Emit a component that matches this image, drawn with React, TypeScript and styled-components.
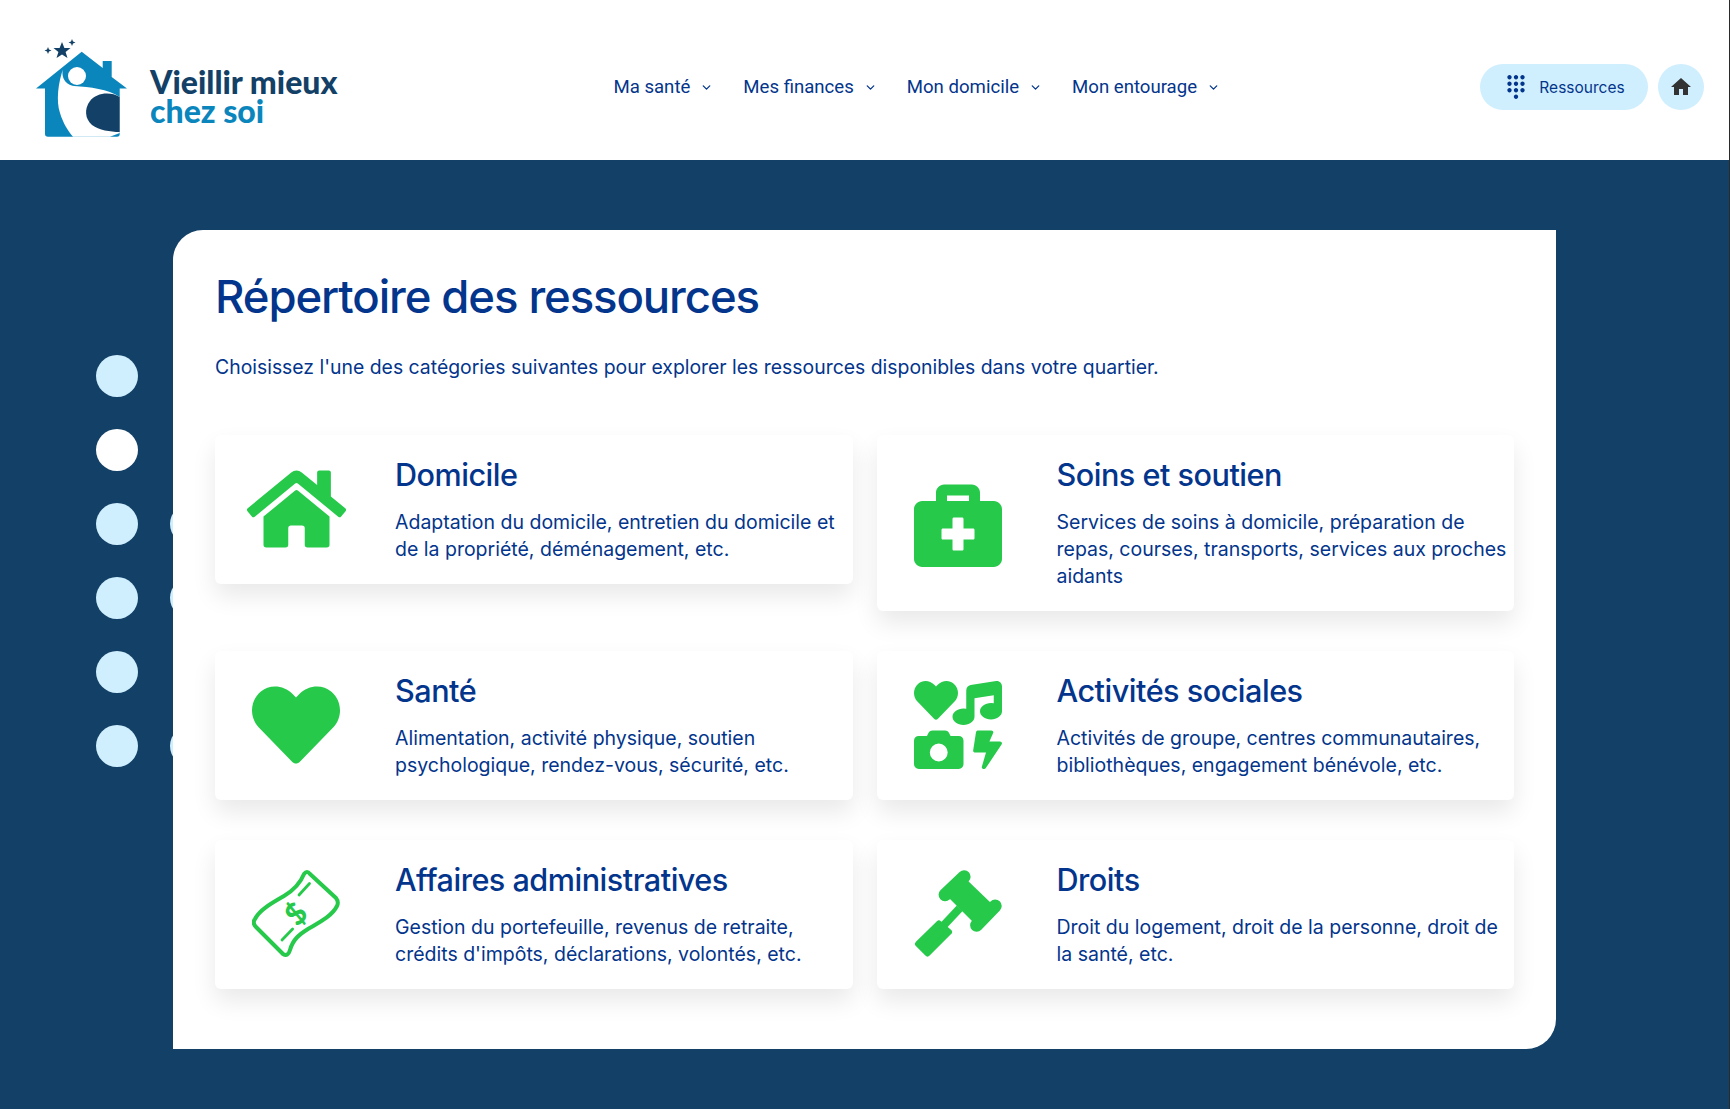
import React from 'react';
import styled, { createGlobalStyle } from 'styled-components';
import { FaHome, FaBriefcaseMedical, FaHeart, FaIcons } from 'react-icons/fa';
import { MdDialpad, MdHome } from 'react-icons/md';
import { ChevronDown } from 'lucide-react';

const navy = '#134066';
const blue = '#03358c';
const green = '#26c94a';
const sky = '#cfeffe';

const GlobalStyle = createGlobalStyle`
  html, body {
    margin: 0;
    padding: 0;
    background: #fff;
  }
  body {
    font-family: 'Inter', 'Liberation Sans', sans-serif;
    color: ${blue};
  }
  * {
    box-sizing: border-box;
  }
`;

const Page = styled.div`
  width: 1730px;
  height: 1109px;
  display: flex;
  flex-direction: column;
  overflow: hidden;
  border-right: 1px solid #2a2a2a;
`;

const Header = styled.header`
  height: 160px;
  flex: none;
  background: #fff;
  display: flex;
  justify-content: space-between;
  align-items: center;
  padding: 14px 25px 0 36px;
`;

const LogoLink = styled.a`
  display: flex;
  align-items: center;
  gap: 15px;
  text-decoration: none;
  margin-top: 3px;
`;

const LogoText = styled.div`
  display: flex;
  flex-direction: column;
  font-family: 'Lato', sans-serif;
  font-weight: 900;
  font-size: 32px;
  line-height: 29px;
  margin-top: 14px;
`;

const LogoLine = styled.span<{ $light?: boolean }>`
  display: block;
  color: ${({ $light }) => ($light ? '#0b86bd' : navy)};
`;

const Nav = styled.nav`
  display: flex;
  align-items: center;
  gap: 30px;
  margin-left: 16px;
`;

const NavItem = styled.a`
  display: flex;
  align-items: center;
  gap: 10px;
  font-family: 'Roboto', sans-serif;
  font-size: 18.6px;
  color: ${blue};

  svg {
    width: 13px;
    height: 13px;
    stroke-width: 2.4;
  }
`;

const HeaderActions = styled.div`
  display: flex;
  justify-content: flex-end;
  gap: 10px;
`;

const ResourcesButton = styled.button`
  width: 168px;
  height: 46px;
  border: none;
  border-radius: 23px;
  background: ${sky};
  color: ${blue};
  display: flex;
  align-items: center;
  justify-content: center;
  gap: 10px;
  font-family: 'Inter', sans-serif;
  font-size: 15.5px;

  svg {
    width: 26px;
    height: 26px;
  }
`;

const HomeButton = styled.button`
  width: 46px;
  height: 46px;
  border: none;
  border-radius: 50%;
  background: ${sky};
  color: #333;
  display: flex;
  align-items: center;
  justify-content: center;
  padding: 0;

  svg {
    width: 24px;
    height: 24px;
  }
`;

const Main = styled.main`
  position: relative;
  flex: 1;
  background: ${navy};
  padding: 70px 173px 60px;
`;

const DotField = styled.div`
  position: absolute;
  left: 96px;
  top: 195px;
  display: grid;
  grid-template-columns: repeat(2, 42px);
  grid-auto-rows: 42px;
  column-gap: 32px;
  row-gap: 32px;
`;

const Dot = styled.span<{ $tone: string }>`
  border-radius: 50%;
  background: ${({ $tone }) => $tone};
`;

const Panel = styled.section`
  position: relative;
  height: 819px;
  background: #fff;
  border-radius: 30px 0 30px 0;
  padding: 39px 42px 0;
`;

const Title = styled.h1`
  margin: 0;
  font-size: 45.5px;
  line-height: 56px;
  font-weight: 450;
  letter-spacing: -1.1px;
  color: ${blue};
`;

const Intro = styled.p`
  margin: 28px 0 0;
  font-size: 19.4px;
  line-height: 28px;
  color: ${blue};
`;

const CardGrid = styled.div`
  margin-top: 54px;
  display: grid;
  grid-template-columns: repeat(2, 1fr);
  column-gap: 24px;
  row-gap: 40px;
  align-items: start;
`;

const Card = styled.article`
  display: grid;
  grid-template-columns: 180px 1fr;
  align-items: center;
  padding: 20px 6px 21px 0;
  background: #fff;
  border-radius: 6px;
  box-shadow: 0 12px 24px rgba(0, 0, 0, 0.09);
`;

const CardIcon = styled.div`
  display: flex;
  justify-content: center;
  padding-right: 18px;
  color: ${green};

  svg {
    height: 88px;
    width: 88px;
  }
`;

const HouseIcon = styled(FaHome)`
  && {
    width: 99px;
  }
`;

const CardTitle = styled.h2`
  margin: 0;
  font-size: 30.6px;
  line-height: 40px;
  font-weight: 450;
  letter-spacing: -0.5px;
  color: ${blue};
`;

const CardText = styled.p`
  margin: 14px 0 0;
  font-size: 19.5px;
  line-height: 27px;
  color: ${blue};
`;

const LogoMark = () => (
  <svg width="105" height="105" viewBox="30 35 105 105" style={{ marginLeft: -6 }}>
    <path fill="#0b86bd" d="M81.700 50.700 L102.700 67 V60 H111.700 V76 L127 87.500 H119.700 V133 Q119.700 135.700 117 135.700 H48 Q45 135.700 45 133 V87.500 H36 Z" />
    <path fill="#fff" d="M63.500 66.500 C58 82 56 100 60 112 C63 122 68 130 73 135.700 H110 L119.700 132 V96 C108 88 90 86 74 85 C66 84 60 76 63.500 66.500 Z" />
    <circle cx="77" cy="75" r="9" fill="#fff" />
    <path fill={navy} d="M119.700 96 C110 90 96 92 90 100 C84 108 85 118 92 124 C99 129 110 131 119.700 131 Z" />
    <path fill={navy} d="M62 41 L64.400 47 L70.500 47 L65.600 51 L67.500 57 L62 53.400 L56.500 57 L58.400 51 L53.500 47 L59.600 47 Z" />
    <path fill={navy} d="M48 46 L49 48.500 L51.500 49.500 L49 50.500 L48 53 L47 50.500 L44.500 49.500 L47 48.500 Z" />
    <path fill={navy} d="M72 38 L73 40.500 L75.500 41.500 L73 42.500 L72 45 L71 42.500 L68.500 41.500 L71 40.500 Z" />
  </svg>
);

const MoneyIcon = () => (
  <svg viewBox="0 0 88 88" fill="none" stroke="currentColor" strokeLinecap="round" strokeLinejoin="round">
    <path strokeWidth="4" d="M52 4 Q55 0 58 4 L84 28 Q87 32 85 36 C80 46 68 52 56 59 C48 64 41 69 38 80 Q36 87 31 84 L4 57 Q0 53 3 49 C8 39 22 32 32 26 C42 20 48 14 52 4 Z" />
    <path strokeWidth="2.800" d="M47 25 L57.500 13.500 M30 70 L40.600 59" />
    <text x="44" y="54.500" fill="currentColor" stroke="none" fontFamily="Lato, sans-serif" fontWeight="900" fontSize="30" textAnchor="middle" transform="rotate(-45 44 44)">$</text>
  </svg>
);

const GavelIcon = () => (
  <svg viewBox="0 0 88 88" fill="currentColor" stroke="currentColor" strokeLinecap="round" strokeLinejoin="round">
    <path strokeWidth="13" d="M50.100 6.800 L31.100 24.700 M81.200 35.900 L62.600 55.200" />
    <path stroke="none" d="M52 9 L78 34 L60 53 L34 27 Z" />
    <path strokeWidth="8" strokeLinecap="butt" d="M45.700 38.300 L30 55" />
    <path strokeWidth="6" d="M25 53.500 L35 62 L13.500 83.500 L4 74 Z" />
  </svg>
);

const menu = ['Ma santé', 'Mes finances', 'Mon domicile', 'Mon entourage'];

const categories = [
  {
    title: 'Domicile',
    text: 'Adaptation du domicile, entretien du domicile et de la propriété, déménagement, etc.',
    icon: <HouseIcon />,
  },
  {
    title: 'Soins et soutien',
    text: 'Services de soins à domicile, préparation de repas, courses, transports, services aux proches aidants',
    icon: <FaBriefcaseMedical />,
  },
  {
    title: 'Santé',
    text: 'Alimentation, activité physique, soutien psychologique, rendez-vous, sécurité, etc.',
    icon: <FaHeart />,
  },
  {
    title: 'Activités sociales',
    text: 'Activités de groupe, centres communautaires, bibliothèques, engagement bénévole, etc.',
    icon: <FaIcons />,
  },
  {
    title: 'Affaires administratives',
    text: "Gestion du portefeuille, revenus de retraite, crédits d'impôts, déclarations, volontés, etc.",
    icon: <MoneyIcon />,
  },
  {
    title: 'Droits',
    text: 'Droit du logement, droit de la personne, droit de la santé, etc.',
    icon: <GavelIcon />,
  },
];

const dots = [sky, navy, '#fff', navy, sky, sky, sky, sky, sky, navy, sky, sky];

export default function App() {
  return (
    <>
      <GlobalStyle />
      <Page>
        <Header>
          <LogoLink>
            <LogoMark />
            <LogoText>
              <LogoLine>Vieillir mieux</LogoLine>
              <LogoLine $light>chez soi</LogoLine>
            </LogoText>
          </LogoLink>
          <Nav>
            {menu.map((label) => (
              <NavItem key={label}>
                {label}
                <ChevronDown />
              </NavItem>
            ))}
          </Nav>
          <HeaderActions>
            <ResourcesButton>
              <MdDialpad />
              Ressources
            </ResourcesButton>
            <HomeButton>
              <MdHome />
            </HomeButton>
          </HeaderActions>
        </Header>
        <Main>
          <DotField>
            {dots.map((tone, i) => (
              <Dot key={i} $tone={tone} />
            ))}
          </DotField>
          <Panel>
            <Title>Répertoire des ressources</Title>
            <Intro>
              Choisissez l'une des catégories suivantes pour explorer les ressources disponibles dans votre quartier.
            </Intro>
            <CardGrid>
              {categories.map((c) => (
                <Card key={c.title}>
                  <CardIcon>{c.icon}</CardIcon>
                  <div>
                    <CardTitle>{c.title}</CardTitle>
                    <CardText>{c.text}</CardText>
                  </div>
                </Card>
              ))}
            </CardGrid>
          </Panel>
        </Main>
      </Page>
    </>
  );
}
